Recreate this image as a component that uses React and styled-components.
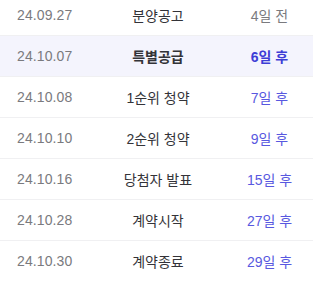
import styled, { createGlobalStyle } from 'styled-components';

const GlobalStyle = createGlobalStyle`
  html, body {
    margin: 0;
    padding: 0;
    background: #ffffff;
  }
  body {
    font-family: 'Liberation Sans', 'Noto Sans CJK KR', sans-serif;
  }
`;

const Schedule = styled.div`
  width: 313px;
  margin-top: -5px;
`;

const Row = styled.div`
  display: grid;
  grid-template-columns: 88px 140px 1fr;
  align-items: center;
  height: 40px;
  border-bottom: 1px solid ${({ $last }) => ($last ? 'transparent' : '#f0f0f2')};
  background: ${({ $active }) => ($active ? '#f4f4fd' : '#ffffff')};
  font-size: 14px;
`;

const DateCell = styled.span`
  padding-left: 17px;
  color: #7a7a7e;
  letter-spacing: 0.1px;
`;

const Title = styled.span`
  text-align: center;
  color: #333338;
  font-weight: ${({ $active }) => ($active ? 700 : 400)};
`;

const Remain = styled.span`
  text-align: center;
  padding-right: 2px;
  color: ${({ $past, $active }) => ($past ? '#7a7a7e' : $active ? '#3d3dd6' : '#5858e0')};
  font-weight: ${({ $active }) => ($active ? 700 : 400)};
`;

const rows = [
  { date: '24.09.27', title: '분양공고', remain: '4일 전', past: true },
  { date: '24.10.07', title: '특별공급', remain: '6일 후', active: true },
  { date: '24.10.08', title: '1순위 청약', remain: '7일 후' },
  { date: '24.10.10', title: '2순위 청약', remain: '9일 후' },
  { date: '24.10.16', title: '당첨자 발표', remain: '15일 후' },
  { date: '24.10.28', title: '계약시작', remain: '27일 후' },
  { date: '24.10.30', title: '계약종료', remain: '29일 후' },
];

export default function App() {
  return (
    <>
      <GlobalStyle />
      <Schedule>
        {rows.map((r, i) => (
          <Row key={r.date} $active={r.active} $last={i === rows.length - 1}>
            <DateCell>{r.date}</DateCell>
            <Title $active={r.active}>{r.title}</Title>
            <Remain $past={r.past} $active={r.active}>
              {r.remain}
            </Remain>
          </Row>
        ))}
      </Schedule>
    </>
  );
}
